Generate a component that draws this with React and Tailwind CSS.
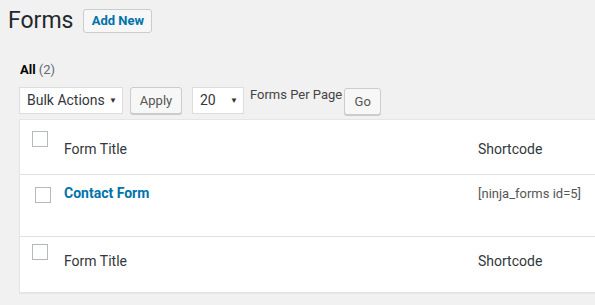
import React from 'react'

function Checkbox() {
    return <span className="block w-4 h-4 border border-[#b4b9be] bg-white shrink-0" />
}

function Select({ label, width }) {
    return (
        <div className={`flex items-center justify-between h-[27px] bg-white border border-[#ddd] pl-[7px] pr-[5px] text-[14px] text-[#32373c] ${width}`}>
            <span>{label}</span>
            <span className="text-[8px] text-[#333]">▼</span>
        </div>
    )
}

function HeadRow({ row, boxTop, textTop }) {
    return (
        <div className={`flex ${row}`}>
            <div className={`w-[44px] pl-[12px] ${boxTop}`}><Checkbox /></div>
            <div className={`w-[414px] text-[14px] text-[#32373c] ${textTop}`}>Form Title</div>
            <div className={`text-[14px] text-[#32373c] ${textTop}`}>Shortcode</div>
        </div>
    )
}

export default function App() {
    return (
        <div className="w-[595px] h-[305px] bg-[#f1f1f1] overflow-hidden" style={{ fontFamily: 'Roboto, "Liberation Sans", sans-serif' }}>
            <div className="flex items-center pl-[8px] pt-[9px]">
                <h1 className="text-[23px] leading-[24px] text-[#23282d] font-normal">Forms</h1>
                <button className="ml-[10px] h-[24px] w-[69px] border border-[#ccc] rounded-[3px] bg-[#f7f7f7] text-[13px] font-bold text-[#0073aa]">Add New</button>
            </div>
            <div className="pl-[20px] mt-[28px] text-[13px] leading-[18px] text-[#555]">
                <span className="font-bold text-black">All</span> <span className="text-[#646970]">(2)</span>
            </div>
            <div className="flex items-start pl-[19px] mt-[8px]">
                <Select label="Bulk Actions" width="w-[104px]" />
                <button className="ml-[7px] h-[27px] w-[52px] border border-[#ccc] rounded-[3px] bg-[#f7f7f7] shadow-[0_1px_0_#ccc] text-[13px] text-[#555]">Apply</button>
                <Select label="20" width="ml-[10px] w-[52px]" />
                <span className="ml-[6px] text-[13px] leading-[15px] text-[#444]">Forms Per Page</span>
                <button className="ml-[2px] mt-[1px] h-[27px] w-[37px] border border-[#ccc] rounded-[3px] bg-[#f7f7f7] shadow-[0_1px_0_#ccc] text-[13px] text-[#555]">Go</button>
            </div>
            <div className="ml-[19px] mt-[4px] w-[600px] bg-white border border-[#e5e5e5] shadow-[0_1px_1px_rgba(0,0,0,0.04)]">
                <HeadRow row="h-[55px] border-b border-[#e1e1e1]" boxTop="pt-[11px]" textTop="pt-[19px]" />
                <div className="flex h-[62px] border-b border-[#e1e1e1]">
                    <div className="w-[44px] pl-[15px] pt-[12px]"><Checkbox /></div>
                    <div className="w-[414px] pt-[8px] text-[14px] font-bold text-[#0073aa]">Contact Form</div>
                    <div className="pt-[9px] text-[13px] text-[#555]">[ninja_forms id=5]</div>
                </div>
                <HeadRow row="h-[55px]" boxTop="pt-[7px]" textTop="pt-[14px]" />
            </div>
        </div>
    )
}
